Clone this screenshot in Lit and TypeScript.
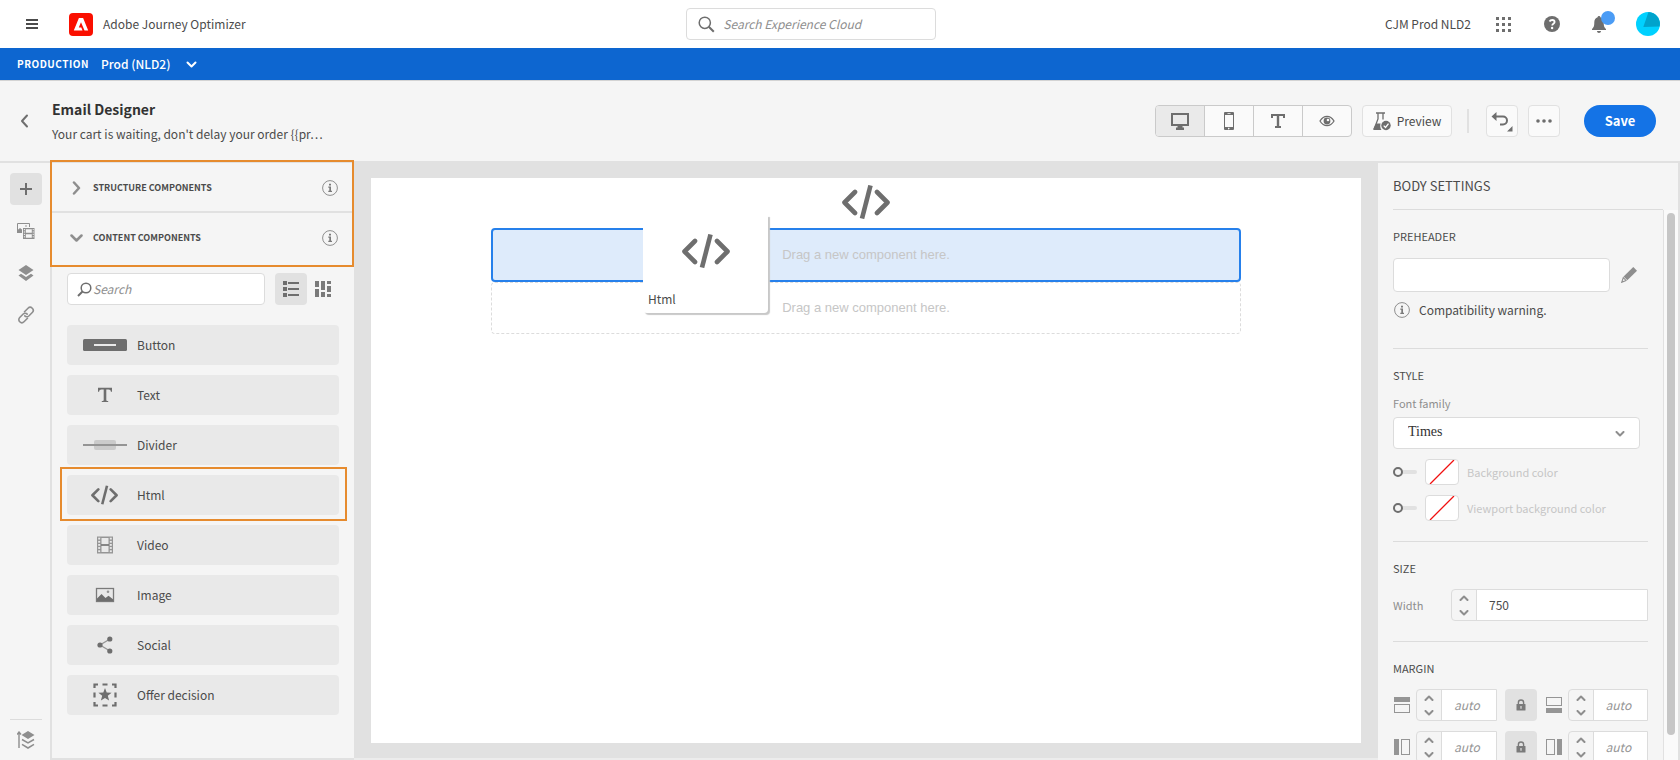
import { LitElement, html, css, svg } from "lit";
import { customElement, property, state } from "lit/decorators.js";
import { classMap } from "lit/directives/class-map.js";

const chevron = (points: string, w: number, h: number, stroke = 2) => html`
  <svg width=${w} height=${h} viewBox="0 0 ${w} ${h}" aria-hidden="true">
    <polyline points=${points} fill="none" stroke="currentColor" stroke-width=${stroke} stroke-linecap="round" stroke-linejoin="round" />
  </svg>`;

const codeIcon = (w: number, h: number) => html`
  <svg width=${w} height=${h} viewBox="0 0 48 34" aria-hidden="true">
    <g fill="none" stroke="currentColor" stroke-width="4.600">
      <path d="M13 7 2.500 17.500 13 28M35 7l10.500 10.500L35 28" stroke-linecap="round" stroke-linejoin="round" />
      <path d="M28.500 0.500 20 33.500" />
    </g>
  </svg>`;

const infoIcon = html`
  <svg width="16" height="16" viewBox="0 0 16 16" aria-hidden="true">
    <circle cx="8" cy="8" r="7.400" fill="none" stroke="#8e8e8e" stroke-width="1" />
    <path d="M7 3.700h2v1.800H7zM6.300 6.600H9v4.100h1v1.200H6.300v-1.200h1V7.800h-1z" fill="#7a7a7a" />
  </svg>`;

const filmIcon = html`
  <svg width="18" height="18" viewBox="0 0 18 18" aria-hidden="true">
    <path fill="#959595" fill-rule="evenodd" d="M1 .5h16v17H1zM5.500 2v6.300h7V2zM5.500 9.700V16h7V9.700z" />
    <g fill="#e9e9e9">
      ${[1.7, 4.9, 8, 11.1, 14.3].map((y) => svg`<rect x="2.200" y=${y} width="2" height="1.800"/><rect x="13.800" y=${y} width="2" height="1.800"/>`)}
    </g>
    <path d="M5 9h8" stroke="#6e6e6e" stroke-width="1.200" />
  </svg>`;

const lockIcon = html`
  <svg width="10" height="12" viewBox="0 0 10 12" aria-hidden="true">
    <path d="M2.400 6V3.600a2.600 2.600 0 0 1 5.200 0V6" fill="none" stroke="#7a7a7a" stroke-width="1.400" />
    <rect x=".5" y="5" width="9" height="6.500" rx=".6" fill="#7a7a7a" />
    <path d="M4.400 7h1.200v2.700H4.400z" fill="#e1e1e1" />
  </svg>`;

const sideIcon = (side: "top" | "bottom" | "left" | "right") => {
  const parts = {
    top: svg`<rect width="16" height="5" y="0" fill="#959595"/><rect x=".5" y="7.500" width="15" height="8" fill="none" stroke="#959595"/>`,
    bottom: svg`<rect x=".5" y=".5" width="15" height="8" fill="none" stroke="#959595"/><rect width="16" height="5" y="11" fill="#959595"/>`,
    left: svg`<rect width="5" height="16" fill="#959595"/><rect x="7.500" y=".5" width="8" height="15" fill="none" stroke="#959595"/>`,
    right: svg`<rect x=".5" y=".5" width="8" height="15" fill="none" stroke="#959595"/><rect x="11" width="5" height="16" fill="#959595"/>`,
  };
  return html`<svg width="16" height="16" viewBox="0 0 16 16" aria-hidden="true">${parts[side]}</svg>`;
};

const components = [
  {
    name: "Button",
    icon: html`<svg width="44" height="12" viewBox="0 0 44 12"><rect width="44" height="12" rx="1.500" fill="#6e6e6e"/><path d="M11 6h22" stroke="#e9e9e9" stroke-width="2"/></svg>`,
  },
  {
    name: "Text",
    icon: html`<svg width="16" height="16" viewBox="0 0 16 16"><path fill="#6e6e6e" d="M1 .8h14v4h-1.100c-.2-1.700-.8-2.400-2.500-2.400H9.300v10.300c0 1 .4 1.300 1.900 1.400v1H4.800v-1c1.500-.1 1.900-.4 1.900-1.400V2.400H4.600C2.900 2.400 2.300 3.100 2.100 4.800H1z"/></svg>`,
  },
  {
    name: "Divider",
    icon: html`<svg width="44" height="10" viewBox="0 0 44 10"><rect x="11" width="22" height="10" rx="2" fill="#cbcbcb"/><path d="M0 5h44" stroke="#959595" stroke-width="2"/></svg>`,
  },
  { name: "Html", icon: codeIcon(27, 20) },
  { name: "Video", icon: filmIcon },
  {
    name: "Image",
    icon: html`<svg width="20" height="16" viewBox="0 0 20 16"><rect x="1.500" y="1.500" width="17" height="13" fill="none" stroke="#7a7a7a" stroke-width="1.300"/><path d="M2 14v-2.500L6.500 7l4 4 3-2.300 4.500 3.600V14z" fill="#6e6e6e"/><circle cx="13" cy="4.800" r="1.300" fill="#959595"/></svg>`,
  },
  {
    name: "Social",
    icon: html`<svg width="16" height="18" viewBox="0 0 16 18"><path d="M13 3 3 9l10 6" fill="none" stroke="#959595" stroke-width="1.300"/><g fill="#6e6e6e"><circle cx="12.800" cy="3" r="2.600"/><circle cx="3" cy="9" r="2.600"/><circle cx="12.800" cy="15" r="2.600"/></g></svg>`,
  },
  {
    name: "Offer decision",
    icon: html`<svg width="24" height="24" viewBox="0 0 24 24"><path d="M5 1.500H1.500V5M9.500 1.500h5M19 1.500h3.500V5M22.500 9.500v5M22.500 19v3.500H19M14.500 22.500h-5M5 22.500H1.500V19M1.500 14.500v-5" fill="none" stroke="#6e6e6e" stroke-width="2.200"/><path fill="#6e6e6e" d="m12 5 1.700 4.600 4.900.2-3.800 3 1.300 4.800L12 14.900l-4.100 2.700 1.300-4.800-3.800-3 4.900-.2z"/></svg>`,
  },
];

@customElement("number-stepper")
export class NumberStepper extends LitElement {
  @property() label = "";
  @property() value = "";

  static styles = css`
    :host { display: flex; height: 32px; min-width: 0; box-sizing: border-box; border: 1px solid #dcdcdc; border-radius: 4px 0 0 4px; overflow: hidden; }
    .arrows { flex: none; width: 25px; box-sizing: border-box; display: flex; flex-direction: column; border-right: 1px solid #dcdcdc; color: #8e8e8e; }
    .arrow { flex: 1; display: grid; place-items: center; margin: 0; padding: 0; border: 0; background: none; color: inherit; }
    .field { flex: 1; min-width: 0; border: 0; padding: 0 12px; background: #fff; font: 12px/20px "Noto Sans CJK SC", sans-serif; color: #4b4b4b; outline: none; }
    .field::placeholder { color: #959595; font-style: italic; opacity: 1; }
  `;

  private bump(step: number) {
    this.value = String((parseInt(this.value, 10) || 0) + step);
  }

  render() {
    return html`
      <div class="arrows">
        <button class="arrow" aria-label="Increase ${this.label}" @click=${() => this.bump(1)}>${chevron("1.500,5 5,1.500 8.500,5", 10, 6)}</button>
        <button class="arrow" aria-label="Decrease ${this.label}" @click=${() => this.bump(-1)}>${chevron("1.500,1 5,4.500 8.500,1", 10, 6)}</button>
      </div>
      <input class="field" aria-label=${this.label} placeholder="auto" .value=${this.value}
        @change=${(e: Event) => (this.value = (e.target as HTMLInputElement).value)} />`;
  }
}

@customElement("app-root")
export class AppRoot extends LitElement {
  @state() private device = "Desktop";

  static styles = css`
    :host { display: flex; flex-direction: column; height: 100vh; overflow: hidden; background: #f5f5f5; color: #4b4b4b; font: 12px/20px "Noto Sans CJK SC", "Noto Sans", sans-serif; }
    *, *::before, *::after { box-sizing: border-box; }
    svg { display: block; flex: none; }
    button { margin: 0; padding: 0; border: 0; background: none; font: inherit; color: inherit; display: flex; align-items: center; justify-content: center; flex: none; }
    input, select { font: inherit; color: inherit; outline: none; margin: 0; }
    input::placeholder { color: #8e8e8e; font-style: italic; opacity: 1; }
    h1, h2, h3, p, ul { margin: 0; padding: 0; font: inherit; list-style: none; }

    .top { flex: none; height: 48px; background: #fff; display: flex; align-items: center; justify-content: space-between; padding: 0 20px 0 26px; }
    .brand { display: flex; align-items: center; }
    .logo { margin: 0 10px 0 31px; }
    .global-search { width: 250px; height: 32px; border: 1px solid #dcdcdc; border-radius: 4px; display: flex; align-items: center; gap: 8px; padding: 0 11px; margin-right: 8px; }
    .global-search input { flex: 1; min-width: 0; border: 0; padding: 0; background: none; }
    .account { display: flex; align-items: center; color: #6e6e6e; }
    .org { color: #4b4b4b; margin-right: 25px; }
    .help { margin: 0 32px 0 33px; }
    .bell { position: relative; margin-right: 30px; }
    .badge { position: absolute; left: 9px; top: -5px; width: 14px; height: 14px; border-radius: 50%; background: #4b9cf5; }

    .sandbox { flex: none; height: 32px; background: #0d66d0; color: #fff; display: flex; align-items: center; padding-left: 17px; }
    .sandbox .kind { font-size: 10px; font-weight: 700; letter-spacing: 0.05em; margin-right: 12px; }
    .sandbox .pick { gap: 16px; font-weight: 500; }

    .bar { flex: none; height: 81px; border-top: 1px solid #d3d3d3; display: flex; align-items: center; padding: 0 24px 0 20px; }
    .back { color: #6e6e6e; margin-right: 23px; }
    .titles { flex: 1; min-width: 0; }
    .titles h1 { font-size: 14px; font-weight: 700; line-height: 25px; color: #323232; }
    .titles p { line-height: 24px; }
    .group { display: flex; height: 32px; border: 1px solid #cacaca; border-radius: 4px; overflow: hidden; background: #fafafa; color: #6e6e6e; }
    .group button { width: 49px; border-left: 1px solid #cacaca; }
    .group button:first-child { width: 48px; border-left: 0; }
    .group .on { background: #eaeaea; }
    .tool { height: 32px; border: 1px solid #e1e1e1; border-radius: 4px; background: #fafafa; color: #6e6e6e; width: 32px; }
    .preview { width: 90px; margin-left: 10px; gap: 6px; color: #4b4b4b; }
    .rule { width: 2px; height: 24px; background: #e1e1e1; margin: 0 17px 0 15px; }
    .more { margin: 0 24px 0 10px; }
    .save { width: 72px; height: 32px; border-radius: 16px; background: #1473e6; color: #fff; font-size: 13px; font-weight: 700; }

    .work { flex: 1; min-height: 0; display: flex; background: #e1e1e1; border-right: 2px solid #e1e1e1; }
    .rail { flex: none; width: 50px; margin: 2px 2px 0 0; background: #f5f5f5; display: flex; flex-direction: column; align-items: center; padding: 10px 0 4px 2px; gap: 10px; color: #8e8e8e; }
    .rail button { width: 32px; height: 32px; border-radius: 4px; }
    .rail .on { background: #e1e1e1; color: #6e6e6e; }
    .rail .foot { margin-top: auto; border-top: 1px solid #dcdcdc; padding-top: 4px; }

    .side { flex: none; width: 302px; margin: 2px 0; background: #f5f5f5; position: relative; }
    .fold { width: 100%; height: 48px; padding: 2px 16px 0 15px; gap: 7px; justify-content: flex-start; font-size: 9px; font-weight: 700; color: #4b4b4b; }
    .fold .arrow { width: 19px; display: flex; justify-content: center; color: #8e8e8e; }
    .fold .name { flex: 1; text-align: left; }
    .split { height: 2px; background: #e1e1e1; }
    .callout { position: absolute; border: 2px solid #e68b2e; pointer-events: none; }
    .folds-mark { left: -2px; right: 0; top: -3px; height: 107px; }
    .finder { display: flex; align-items: center; padding: 12px 15px 0; }
    .find { flex: 1; min-width: 0; height: 32px; background: #fff; border: 1px solid #dcdcdc; border-radius: 4px; display: flex; align-items: center; gap: 1px; padding: 0 9px; margin-right: 10px; }
    .find input { flex: 1; min-width: 0; border: 0; padding: 0; background: none; }
    .view { width: 32px; height: 32px; border-radius: 4px; color: #6e6e6e; }
    .view.on { background: #e1e1e1; }
    .parts { display: flex; flex-direction: column; gap: 10px; padding: 20px 15px 0; }
    .part { position: relative; }
    .part button { width: 100%; height: 40px; border-radius: 4px; background: #e9e9e9; justify-content: flex-start; padding-left: 10px; color: #4b4b4b; }
    .glyph { width: 55px; display: flex; justify-content: center; color: #6e6e6e; margin-right: 5px; }
    .part-mark { left: -7px; right: -8px; top: -8px; bottom: -6px; }

    .stage { flex: 1; min-width: 0; padding: 17px 17px 15px; border-bottom: 2px solid #ececec; }
    .paper { height: 100%; background: #fff; position: relative; display: flex; flex-direction: column; align-items: center; padding: 7px 20px 0; color: #6e6e6e; }
    .drop { width: 100%; max-width: 750px; height: 52px; border: 1px dashed #dcdcdc; border-radius: 4px; display: grid; place-items: center; color: #c6c6c6; font: 13px/20px "Liberation Sans", Arial, sans-serif; }
    .drop.over { height: 54px; border: 2px solid #2680eb; background: #deebfb; margin-top: 9px; }
    .drag { position: absolute; left: 272px; top: 37px; width: 125px; height: 98px; background: #fff; border-radius: 0 0 4px 4px; box-shadow: 2px 2px 1px #c8c8c8; display: flex; flex-direction: column; align-items: center; justify-content: space-between; padding: 19px 5px 4px; }
    .drag .name { align-self: stretch; color: #4b4b4b; }

    .props { flex: none; width: 300px; margin-top: 2px; background: #f5f5f5; display: flex; flex-direction: column; }
    .props h2 { flex: none; margin: 0 15px; height: 47px; line-height: 46px; border-bottom: 1px solid #dcdcdc; font-size: 13px; }
    .scroll { flex: 1; min-height: 0; display: flex; }
    .form { flex: 1; min-width: 0; overflow: hidden; border-right: 1px solid #e1e1e1; padding: 0 15px; }
    .track { flex: none; width: 14px; background: #fafafa; display: flex; padding: 3px 3px 25px; }
    .thumb { flex: 1; border-radius: 4px; background: #c6c6c6; }
    section { padding: 16px 0 20px; border-bottom: 1px solid #dcdcdc; }
    h3 { font-size: 11px; line-height: 20px; }
    .pre { display: flex; align-items: center; gap: 11px; margin-top: 12px; }
    .pre input { flex: 1; min-width: 0; height: 34px; background: #fff; border: 1px solid #dcdcdc; border-radius: 4px; padding: 0 12px; }
    .pre button { margin-right: 11px; }
    .warn { display: flex; align-items: center; gap: 9px; margin: 8px 0 8px 1px; }
    .small { font-size: 11px; color: #8e8e8e; }
    .font-label { display: block; margin-top: 8px; }
    .pick-font { position: relative; display: flex; margin: 4px 8px 10px 0; color: #8e8e8e; }
    .pick-font select { appearance: none; width: 100%; height: 32px; background: #fff; border: 1px solid #dcdcdc; border-radius: 4px; padding: 0 14px 2px; color: #323232; font: 14px/20px "Liberation Serif", serif; }
    .pick-font svg { position: absolute; right: 15px; top: 14px; pointer-events: none; }
    .colour { display: flex; align-items: center; height: 26px; margin-bottom: 10px; }
    .colour + .colour { margin-bottom: 0; }
    .switch { appearance: none; flex: none; width: 24px; height: 10px; display: flex; align-items: center; margin-right: 8px; }
    .switch::before { content: ""; flex: none; width: 10px; height: 10px; border: 2px solid #6e6e6e; border-radius: 50%; background: #f5f5f5; }
    .switch::after { content: ""; flex: 1; height: 4px; border-radius: 0 2px 2px 0; background: #e1e1e1; }
    .switch:checked { flex-direction: row-reverse; }
    .swatch { width: 34px; height: 26px; border: 1px solid #dcdcdc; border-radius: 4px; background: #fff; margin-right: 8px; }
    .colour label { font-size: 11px; color: #c6c6c6; }
    .width { display: flex; align-items: center; margin-top: 11px; }
    .width .small { width: 58px; }
    .width number-stepper { flex: 1; }
    .margin { display: grid; grid-template-columns: 16px 1fr 40px 25px 1fr; align-items: center; row-gap: 10px; margin-top: 11px; padding-left: 1px; }
    .margin number-stepper { margin-left: 6px; }
    .margin .lock { width: 32px; height: 32px; border-radius: 4px; background: #e1e1e1; justify-self: end; }
    .margin .far { justify-self: end; }
  `;

  private devices = [
    { name: "Desktop", icon: html`<svg width="18" height="18" viewBox="0 0 18 18"><path fill="currentColor" fill-rule="evenodd" d="M0 1h18v13h-6.500v1.500H13V18H5v-2.500h1.500V14H0zm2 2v9h14V3z"/></svg>` },
    { name: "Mobile", icon: html`<svg width="10" height="18" viewBox="0 0 10 18"><path fill="currentColor" fill-rule="evenodd" d="M1 0h8a1 1 0 0 1 1 1v16a1 1 0 0 1-1 1H1a1 1 0 0 1-1-1V1a1 1 0 0 1 1-1zm0 3v12h8V3zm2.500-1.800v.8h3v-.8zM5 15.800a.8.8 0 1 0 0 1.500.8.8 0 0 0 0-1.500z"/></svg>` },
    { name: "Plain text", icon: html`<svg width="14" height="14" viewBox="0 0 14 14"><path fill="currentColor" d="M0 0h14v4h-2V2H8.200v10H10v2H4v-2h1.800V2H2v2H0z"/></svg>` },
    { name: "Visibility", icon: html`<svg width="16" height="12" viewBox="0 0 16 12"><path d="M1 6c1.800-3 4.200-4.700 7-4.700S13.200 3 15 6c-1.800 3-4.200 4.700-7 4.700S2.800 9 1 6z" fill="none" stroke="currentColor" stroke-width="1.300"/><circle cx="8" cy="6" r="3.400" fill="currentColor"/><circle cx="9" cy="5" r="1.300" fill="#fafafa"/></svg>` },
  ];

  render() {
    return html`
      <header class="top">
        <div class="brand">
          <button aria-label="Menu"><svg width="12" height="10" viewBox="0 0 12 10"><path d="M0 1h12M0 5h12M0 9h12" stroke="#4b4b4b" stroke-width="2"/></svg></button>
          <svg class="logo" width="24" height="23" viewBox="0 0 24 23"><rect width="24" height="23" rx="4" fill="#fa0f00"/><path d="M9.900 5h4.200l5.100 12.500h-3.700L12 9.200l-2.200 5.200h2.500l1.200 3.100H4.800z" fill="#fff"/></svg>
          <span>Adobe Journey Optimizer</span>
        </div>
        <label class="global-search">
          <svg width="17" height="17" viewBox="0 0 17 17"><circle cx="6.800" cy="6.800" r="5.600" fill="none" stroke="#6e6e6e" stroke-width="1.500"/><path d="m10.800 10.800 5 5" stroke="#6e6e6e" stroke-width="2"/></svg>
          <input type="text" aria-label="Search Experience Cloud" placeholder="Search Experience Cloud" />
        </label>
        <div class="account">
          <span class="org">CJM Prod NLD2</span>
          <button aria-label="Apps"><svg width="15" height="15" viewBox="0 0 15 15" fill="#6e6e6e">${[0, 6, 12].map((y) => [0, 6, 12].map((x) => svg`<rect x=${x} y=${y} width="3" height="3"/>`))}</svg></button>
          <button class="help" aria-label="Help"><svg width="16" height="16" viewBox="0 0 16 16"><circle cx="8" cy="8" r="8" fill="#6e6e6e"/><path d="M5.500 5.400C6.200 4.300 7 4 8.200 4c1.400 0 2.400.7 2.400 2 0 1.800-2.400 1.800-2.400 3.600" fill="none" stroke="#fff" stroke-width="1.800"/><circle cx="8.100" cy="12" r="1.200" fill="#fff"/></svg></button>
          <button class="bell" aria-label="Notifications"><svg width="14" height="17" viewBox="0 0 14 17"><path fill="#6e6e6e" d="M7 0c.8 0 1.400.6 1.400 1.300 2 .6 3.300 2.300 3.300 5 0 4.500.8 5.200 2.300 6.700V14H0v-1c1.500-1.500 2.300-2.200 2.300-6.700 0-2.700 1.300-4.400 3.300-5C5.600.6 6.200 0 7 0zM5 15h4c0 1.200-.9 2-2 2s-2-.8-2-2z"/></svg><span class="badge"></span></button>
          <button aria-label="Profile"><svg width="24" height="24" viewBox="0 0 24 24"><circle cx="12" cy="12" r="12" fill="#00d1ff"/><path d="M12.500 0A12 12 0 0 1 23.600 14.600L7.300 15z" fill="#00a3cc"/></svg></button>
        </div>
      </header>

      <div class="sandbox">
        <span class="kind">PRODUCTION</span>
        <button class="pick">Prod (NLD2) ${chevron("1.500,1.500 5.500,5.500 9.500,1.500", 11, 7)}</button>
      </div>

      <div class="bar">
        <button class="back" aria-label="Back">${chevron("7,1.500 2,7 7,12.500", 9, 14, 2)}</button>
        <div class="titles">
          <h1>Email Designer</h1>
          <p>Your cart is waiting, don't delay your order {{pr…</p>
        </div>
        <div class="group">
          ${this.devices.map((d) => html`<button class=${classMap({ on: d.name === this.device })} aria-label=${d.name} @click=${() => (this.device = d.name)}>${d.icon}</button>`)}
        </div>
        <button class="tool preview">
          <svg width="18" height="19" viewBox="0 0 18 19"><path d="M3 1h9M5 1v6L1.500 16" fill="none" stroke="#6e6e6e" stroke-width="1.300"/><path d="M10 1v6.500" stroke="#6e6e6e" stroke-width="1.300"/><path d="M3.400 11.500h4.200c-.6 2-.5 4.500.9 6.500H1c-.8 0-1-.6-.8-1.200z" fill="#6e6e6e"/><circle cx="13" cy="13.500" r="4.700" fill="#6e6e6e"/><path d="m10.700 13.600 1.800 1.800 3-3.800" fill="none" stroke="#fff" stroke-width="1.300"/></svg>
          Preview
        </button>
        <span class="rule"></span>
        <button class="tool" aria-label="Undo"><svg width="22" height="22" viewBox="0 0 22 22"><path d="M3 6.500h9a4 4 0 0 1 0 8H9" fill="none" stroke="#6e6e6e" stroke-width="2"/><path d="M5.500 2v9L.5 6.500zM21.500 16v5.500H16z" fill="#6e6e6e"/></svg></button>
        <button class="tool more" aria-label="More"><svg width="16" height="4" viewBox="0 0 16 4" fill="#6e6e6e"><circle cx="2" cy="2" r="1.800"/><circle cx="8" cy="2" r="1.800"/><circle cx="14" cy="2" r="1.800"/></svg></button>
        <button class="save">Save</button>
      </div>

      <div class="work">
        <nav class="rail">
          <button class="on" aria-label="Components"><svg width="12" height="12" viewBox="0 0 12 12"><path d="M6 0v12M0 6h12" stroke="currentColor" stroke-width="2"/></svg></button>
          <button aria-label="Assets"><svg width="18" height="16" viewBox="0 0 18 16"><path d="M.5 9V.5h12V4" fill="none" stroke="currentColor"/><path d="M0 10V7.500L3 5l2 1.500V10z" fill="currentColor"/><circle cx="9" cy="3" r=".8" fill="currentColor"/><path fill="currentColor" fill-rule="evenodd" d="M6 5h11.500v11H6zM8.800 6.200v3.600h6V6.200zm0 5v3.600h6v-3.600z"/><path d="M7.400 6v9.500M16.200 6v9.500" stroke="#f5f5f5" stroke-dasharray="1.200 1.200"/></svg></button>
          <button aria-label="Layers"><svg width="16" height="16" viewBox="0 0 16 16" fill="currentColor"><path d="m8 0 7.500 5L8 10 .5 5zM3 8.800l5 3.300 5-3.300 2.500 1.700L8 16 .5 10.500z"/></svg></button>
          <button aria-label="Links"><svg width="18" height="18" viewBox="0 0 18 18" fill="none" stroke="currentColor" stroke-width="1.600" stroke-linecap="round"><path d="M7.500 5.800 11 2.300a2.900 2.900 0 0 1 4.300 4.200l-3.500 3.500c-1.200 1.100-2.900 1.100-4-.1"/><path d="M10.500 12.200 7 15.700a2.900 2.900 0 0 1-4.300-4.200L6.200 8c1.200-1.100 2.900-1.100 4 .1"/></svg></button>
          <div class="foot"><button aria-label="Navigation tree"><svg width="18" height="18" viewBox="0 0 18 18"><path d="M2 2v15M0 3.500 2 1l2 2.500" fill="none" stroke="currentColor" stroke-width="1.400"/><path d="m11 0 6.500 4L11 8 4.500 4z" fill="currentColor"/><path d="M5 8.500l6 3.500 6-3.500M5 13.300l6 3.700 6-3.700" fill="none" stroke="currentColor" stroke-width="1.500"/></svg></button></div>
        </nav>

        <aside class="side">
          <button class="fold"><span class="arrow">${chevron("2,1.500 7,7 2,12.500", 9, 14, 2.5)}</span><span class="name">STRUCTURE COMPONENTS</span>${infoIcon}</button>
          <div class="split"></div>
          <button class="fold"><span class="arrow">${chevron("1.500,1.500 6.500,6.500 11.500,1.500", 13, 8, 2.5)}</span><span class="name">CONTENT COMPONENTS</span>${infoIcon}</button>
          <div class="callout folds-mark"></div>
          <div class="finder">
            <label class="find">
              <svg width="15" height="15" viewBox="0 0 15 15"><circle cx="9" cy="6" r="4.800" fill="none" stroke="#6e6e6e" stroke-width="1.500"/><path d="M5.500 9.500 1 14" stroke="#6e6e6e" stroke-width="2"/></svg>
              <input type="text" aria-label="Search" placeholder="Search" />
            </label>
            <button class="view on" aria-label="List view"><svg width="16" height="16" viewBox="0 0 16 16" fill="#6e6e6e"><path d="M0 0h4v4H0zM0 6h4v4H0zM0 12h4v4H0zM5 1h11v2H5zM5 7h11v2H5zM5 13h11v2H5z"/></svg></button>
            <button class="view" aria-label="Grid view"><svg width="16" height="16" viewBox="0 0 16 16" fill="#7a7a7a"><path d="M0 0h4v6H0zM0 8h4v8H0zM6 0h4v9H6zM6 11h4v5H6zM12 0h4v3h-4zM12 5h4v6h-4zM12 13h4v3h-4z"/></svg></button>
          </div>
          <ul class="parts">
            ${components.map((c) => html`<li class="part"><button><span class="glyph">${c.icon}</span>${c.name}</button>${c.name === "Html" ? html`<div class="callout part-mark"></div>` : ""}</li>`)}
          </ul>
        </aside>

        <main class="stage">
          <div class="paper">
            ${codeIcon(48, 34)}
            <div class="drop over">Drag a new component here.</div>
            <div class="drop">Drag a new component here.</div>
            <div class="drag">${codeIcon(48, 34)}<span class="name">Html</span></div>
          </div>
        </main>

        <aside class="props">
          <h2>BODY SETTINGS</h2>
          <div class="scroll">
            <div class="form">
              <section>
                <h3>PREHEADER</h3>
                <div class="pre">
                  <input type="text" aria-label="Preheader" />
                  <button aria-label="Edit"><svg width="16" height="16" viewBox="0 0 16 16"><path d="M12.300 0 16 3.700l-9.700 9.500-3.700-3.600z" fill="#8e8e8e"/><path d="M2.300 10.600 5 13.500.7 15.300z" fill="none" stroke="#8e8e8e" stroke-width="1.100"/></svg></button>
                </div>
                <p class="warn">${infoIcon}Compatibility warning.</p>
              </section>
              <section>
                <h3>STYLE</h3>
                <label class="small font-label" for="font">Font family</label>
                <div class="pick-font"><select id="font"><option>Times</option></select>${chevron("1.500,1 5,4.500 8.500,1", 10, 6)}</div>
                ${["Background color", "Viewport background color"].map((name, i) => html`
                  <div class="colour">
                    <input type="checkbox" class="switch" id="colour-${i}" />
                    <button class="swatch" aria-label="Choose ${name}"><svg width="32" height="24" viewBox="0 0 32 24"><path d="M4 24 28 0" stroke="#f01010" stroke-width="1.300"/></svg></button>
                    <label for="colour-${i}">${name}</label>
                  </div>`)}
              </section>
              <section>
                <h3>SIZE</h3>
                <div class="width"><span class="small">Width</span><number-stepper label="Width" value="750"></number-stepper></div>
              </section>
              <section>
                <h3>MARGIN</h3>
                <div class="margin">
                  ${sideIcon("top")}<number-stepper label="Top margin"></number-stepper>
                  <button class="lock" aria-label="Lock vertical margins">${lockIcon}</button>
                  <span class="far">${sideIcon("bottom")}</span><number-stepper label="Bottom margin"></number-stepper>
                  ${sideIcon("left")}<number-stepper label="Left margin"></number-stepper>
                  <button class="lock" aria-label="Lock horizontal margins">${lockIcon}</button>
                  <span class="far">${sideIcon("right")}</span><number-stepper label="Right margin"></number-stepper>
                </div>
              </section>
            </div>
            <div class="track"><div class="thumb"></div></div>
          </div>
        </aside>
      </div>`;
  }
}
